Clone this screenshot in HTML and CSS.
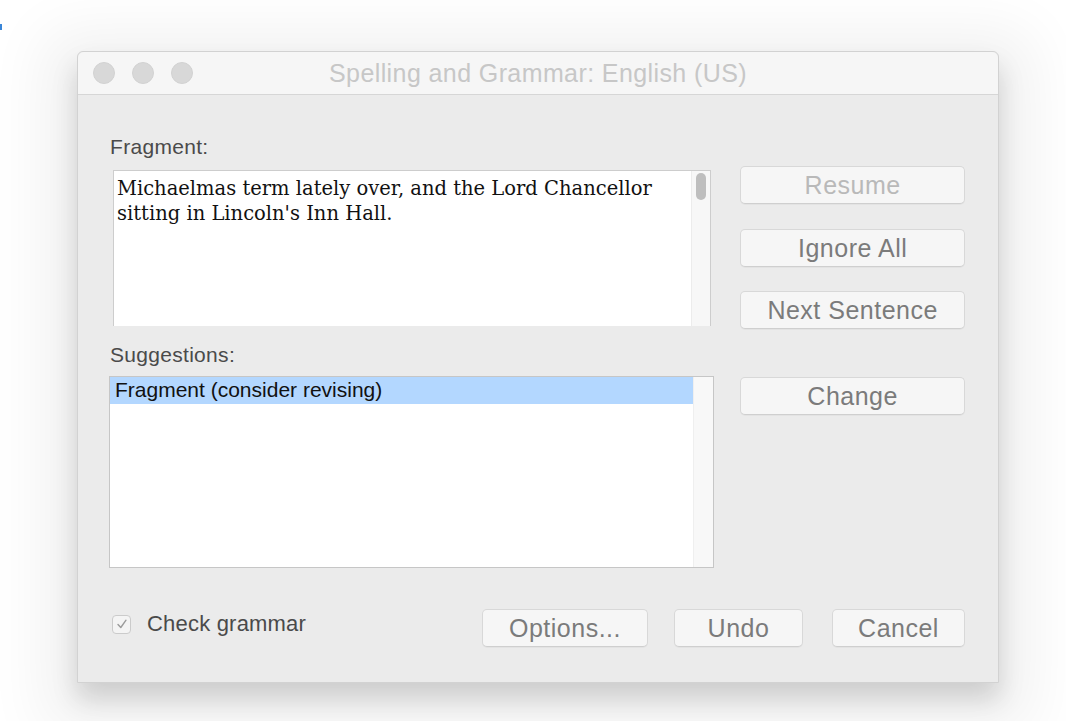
FILE: index.html
```html
<!DOCTYPE html>
<html lang="en">
<head>
<meta charset="utf-8">
<title>Spelling and Grammar</title>
<link rel="stylesheet" href="styles.css">
</head>
<body>
<span class="edge-mark"></span>
<div class="window">
  <div class="titlebar">
    <div class="lights">
      <span class="light"></span>
      <span class="light"></span>
      <span class="light"></span>
    </div>
    <div class="title">Spelling and Grammar: English (US)</div>
  </div>
  <div class="content">
    <div class="main">
      <div class="left">
        <div class="label label-first">Fragment:</div>
        <div class="fragment">
          <div class="fragment-text">Michaelmas term lately over, and the Lord Chancellor sitting in Lincoln's Inn Hall.</div>
          <div class="scroll-track"><span class="scroll-thumb"></span></div>
        </div>
        <div class="label label-second">Suggestions:</div>
        <div class="list">
          <div class="list-rows">
            <div class="row selected">Fragment (consider revising)</div>
          </div>
          <div class="list-track"></div>
        </div>
      </div>
      <div class="right">
        <button class="btn disabled">Resume</button>
        <button class="btn gap-a">Ignore All</button>
        <button class="btn gap-b">Next Sentence</button>
        <button class="btn gap-c">Change</button>
      </div>
    </div>
    <div class="footer">
      <label class="check">
        <span class="box">
          <svg width="12" height="12" viewBox="0 0 12 12"><path d="M2 6.5 L4.8 9.5 L10 2.2" fill="none" stroke="#9b9b9b" stroke-width="1.4" stroke-linecap="round" stroke-linejoin="round"/></svg>
        </span>
        <span class="check-label">Check grammar</span>
      </label>
      <div class="footer-buttons">
        <button class="btn btn-options">Options...</button>
        <button class="btn btn-undo">Undo</button>
        <button class="btn btn-cancel">Cancel</button>
      </div>
    </div>
  </div>
</div>
</body>
</html>
```

FILE: styles.css
```css
html, body {
  margin: 0;
  padding: 0;
  background: #ffffff;
  width: 1066px;
  height: 721px;
  overflow: hidden;
  font-family: "Liberation Sans", Arial, sans-serif;
}

.edge-mark {
  position: absolute;
  left: 0;
  top: 24px;
  width: 2px;
  height: 6px;
  background: #3a86d8;
}

.window {
  margin: 51px 0 0 77px;
  width: 922px;
  height: 632px;
  box-sizing: border-box;
  background: #ebebeb;
  border: 1px solid #d2d2d2;
  border-radius: 6px 6px 0 0;
  box-shadow:
    0 16px 26px rgba(0, 0, 0, 0.15),
    0 14px 60px 34px rgba(0, 0, 0, 0.06);
  display: flex;
  flex-direction: column;
}

.titlebar {
  height: 42px;
  flex: none;
  background: #f6f6f6;
  border-bottom: 1px solid #d6d6d6;
  border-radius: 6px 6px 0 0;
  display: flex;
  align-items: center;
  position: relative;
}

.lights {
  display: flex;
  gap: 17px;
  padding-left: 15px;
}

.light {
  width: 22px;
  height: 22px;
  border-radius: 50%;
  background: #d8d8d8;
  box-sizing: border-box;
  border: 1px solid #d2d2d2;
}

.title {
  position: absolute;
  left: 0;
  right: 0;
  text-align: center;
  font-size: 25px;
  letter-spacing: 0.4px;
  color: #c7c7c7;
  line-height: 42px;
}

.content {
  flex: 1;
  display: flex;
  flex-direction: column;
  padding: 0 33px 0 31px;
}

.main {
  display: flex;
  gap: 26px;
}

.left {
  width: 606px;
  display: flex;
  flex-direction: column;
}

.label {
  font-size: 21px;
  letter-spacing: 0.3px;
  line-height: 24px;
  color: #4a4a4a;
  padding-left: 1px;
}

.label-first {
  margin-top: 40px;
}

.label-second {
  margin-top: 17px;
}

.fragment {
  margin-top: 11px;
  margin-left: 4px;
  width: 598px;
  height: 156px;
  box-sizing: border-box;
  background: #ffffff;
  border: 1px solid #cdcdcd;
  border-bottom: none;
  display: flex;
}

.fragment-text {
  flex: 1;
  padding: 5px 20px 0 3px;
  font-family: "DejaVu Serif", "Liberation Serif", serif;
  font-size: 19.5px;
  line-height: 25px;
  color: #111111;
}

.scroll-track {
  width: 19px;
  flex: none;
  background: #f7f7f7;
  border-left: 1px solid #ececec;
  display: flex;
  justify-content: center;
  padding-top: 2px;
  box-sizing: border-box;
}

.scroll-thumb {
  width: 10px;
  height: 27px;
  border-radius: 5px;
  background: #bebebe;
}

.list {
  margin-top: 9px;
  height: 192px;
  box-sizing: border-box;
  background: #ffffff;
  border: 1px solid #c6c6c6;
  display: flex;
}

.list-rows {
  flex: 1;
}

.row {
  height: 27px;
  line-height: 26px;
  font-size: 21px;
  color: #111111;
  padding-left: 5px;
}

.row.selected {
  background: #b3d7ff;
}

.list-track {
  width: 19px;
  flex: none;
  background: #f8f8f8;
  border-left: 1px solid #efefef;
}

.right {
  width: 225px;
  display: flex;
  flex-direction: column;
  padding-top: 71px;
}

.btn {
  height: 38px;
  box-sizing: border-box;
  background: #f6f6f6;
  border: 1px solid #d8d8d8;
  border-bottom-color: #cfcfcf;
  border-radius: 5px;
  font-family: "Liberation Sans", Arial, sans-serif;
  font-size: 25px;
  letter-spacing: 0.5px;
  color: #7b7b7b;
  padding: 0;
  margin: 0;
  box-shadow: 0 1px 0 rgba(0, 0, 0, 0.03);
}

.btn.disabled {
  color: #b9b9b9;
}

.gap-a {
  margin-top: 25px;
}

.gap-b {
  margin-top: 24px;
}

.gap-c {
  margin-top: 48px;
}

.footer {
  margin-top: 41px;
  display: flex;
  align-items: center;
}

.check {
  display: flex;
  align-items: center;
  margin-left: 3px;
  gap: 16px;
}

.box {
  width: 19px;
  height: 19px;
  box-sizing: border-box;
  border: 1px solid #cbcbcb;
  border-radius: 4px;
  background: #f4f4f4;
  display: flex;
  align-items: center;
  justify-content: center;
  margin-top: -8px;
}

.check-label {
  font-size: 22px;
  letter-spacing: 0.2px;
  color: #4a4a4a;
  margin-top: -8px;
}

.footer-buttons {
  margin-left: auto;
  display: flex;
}

.btn-options {
  width: 166px;
}

.btn-undo {
  width: 129px;
  margin-left: 26px;
}

.btn-cancel {
  width: 133px;
  margin-left: 29px;
}
```
